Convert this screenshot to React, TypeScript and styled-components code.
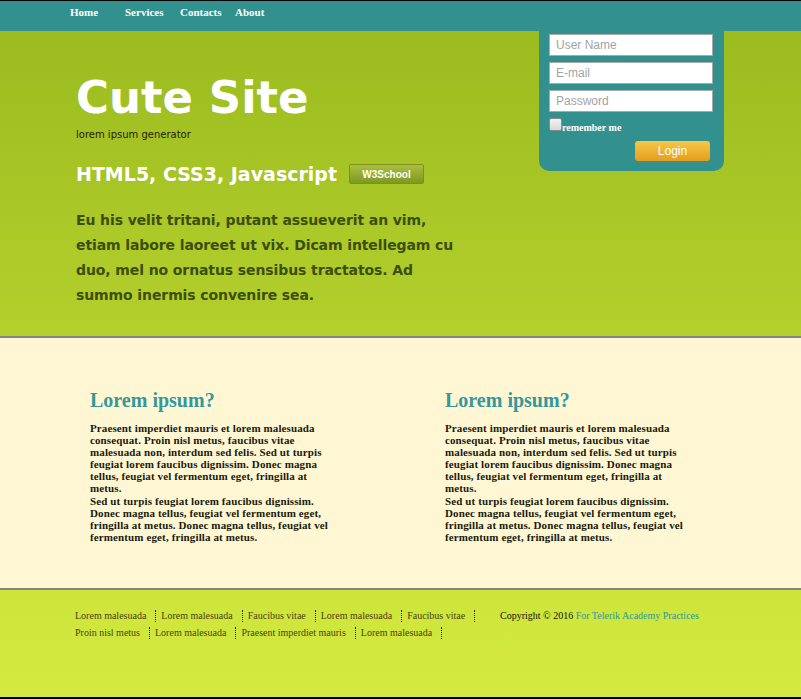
import React from "react";
import styled, { createGlobalStyle } from "styled-components";

const Global = createGlobalStyle`
  html, body { margin: 0; padding: 0; }
  body { font-family: "DejaVu Sans", Verdana, sans-serif; background: #cfe53c; }
  * { box-sizing: border-box; }
`;

const Page = styled.div`
  border-top: 1px solid #000;
  border-bottom: 2px solid #000;
`;

const Container = styled.div`
  width: 661px;
  margin: 0 auto;
`;

const NavBar = styled.nav`
  background: #32918f;
  height: 30px;
`;

const NavList = styled.ul`
  list-style: none;
  margin: 0;
  padding: 0;
  display: flex;
`;

const NavItem = styled.li`
  width: 55px;
  font-family: "Liberation Serif", "Times New Roman", serif;
  font-weight: bold;
  font-size: 11px;
  line-height: 22px;
  color: #fff;
`;

const Hero = styled.header`
  background: linear-gradient(to bottom, #9bbb1f, #b3d02c);
  height: 307px;
  border-bottom: 2px solid #858585;
`;

const HeroRow = styled(Container)`
  display: flex;
  align-items: flex-start;
`;

const HeroText = styled.div`
  flex: 1;
  padding: 41px 0 0 6px;
`;

const Title = styled.h1`
  margin: 0;
  font-size: 45px;
  line-height: 51px;
  font-weight: bold;
  color: #fff;
`;

const Tagline = styled.div`
  font-size: 10px;
  line-height: 14px;
  color: #2a1a00;
  margin-top: 5px;
`;

const TechRow = styled.div`
  display: flex;
  align-items: center;
  gap: 12px;
  margin-top: 20px;
`;

const Tech = styled.h2`
  margin: 0;
  font-size: 19px;
  line-height: 24px;
  font-weight: bold;
  color: #fff;
`;

const SchoolButton = styled.span`
  width: 75px;
  height: 20px;
  display: inline-flex;
  align-items: center;
  justify-content: center;
  border: 1px solid #7f8f22;
  border-radius: 2px;
  background: linear-gradient(to bottom, #a9bf3c, #7f9822);
  color: #fff;
  font-family: "Liberation Sans", Arial, sans-serif;
  font-weight: bold;
  font-size: 10px;
`;

const Lead = styled.p`
  margin: 22px 0 0;
  width: 392px;
  font-size: 14px;
  letter-spacing: -0.1px;
  line-height: 25px;
  font-weight: bold;
  color: #3d4d0c;
`;

const LoginPanel = styled.form`
  width: 185px;
  margin-right: 7px;
  background: #32918f;
  border-radius: 0 0 10px 10px;
  padding: 3px 10px 10px;
  display: flex;
  flex-direction: column;
  gap: 6px;
`;

const Field = styled.input`
  width: 164px;
  height: 22px;
  border: 1px solid #a9a9a9;
  background: #fff;
  padding: 0 6px;
  font-family: "Liberation Sans", Arial, sans-serif;
  font-size: 12px;
  outline: none;
  &::placeholder { color: #a3a3a3; }
`;

const Remember = styled.label`
  display: flex;
  align-items: flex-end;
  font-family: "Liberation Serif", "Times New Roman", serif;
  font-weight: bold;
  font-size: 10px;
  color: #fff;
  height: 15px;
`;

const Check = styled.span`
  width: 13px;
  height: 13px;
  border: 1px solid #8a8a8a;
  border-radius: 2px;
  background: linear-gradient(to bottom, #f2f2f2, #d8d8d8);
  margin-bottom: 2px;
`;

const ButtonRow = styled.div`
  display: flex;
  justify-content: flex-end;
  padding: 2px 4px 0 0;
`;

const LoginButton = styled.span`
  width: 75px;
  height: 20px;
  display: inline-flex;
  align-items: center;
  justify-content: center;
  border-radius: 3px;
  background: linear-gradient(to bottom, #f6c744, #e59d1e);
  color: #fff;
  font-family: "Liberation Sans", Arial, sans-serif;
  font-size: 12px;
`;

const Content = styled.section`
  background: #fff7d4;
  height: 252px;
  border-bottom: 2px solid #858585;
`;

const Columns = styled(Container)`
  display: grid;
  grid-template-columns: 355px 1fr;
  padding: 50px 0 0 20px;
`;

const Article = styled.article`
  width: 245px;
`;

const ArticleTitle = styled.h3`
  margin: 0 0 10px;
  font-family: "Liberation Serif", "Times New Roman", serif;
  font-size: 20px;
  line-height: 24px;
  font-weight: bold;
  color: #35989a;
`;

const ArticleText = styled.p`
  margin: 0;
  font-family: "Liberation Serif", "Times New Roman", serif;
  font-size: 11px;
  letter-spacing: 0.12px;
  line-height: 12.1px;
  font-weight: bold;
  color: #1a1a0a;
`;

const Footer = styled.footer`
  background: linear-gradient(to bottom, #cde43a, #d4ea40);
  height: 107px;
`;

const FooterRow = styled(Container)`
  display: flex;
  align-items: flex-start;
  padding-top: 20px;
`;

const LinkList = styled.ul`
  list-style: none;
  margin: 0;
  padding: 0;
  width: 420px;
  display: flex;
  flex-wrap: wrap;
  row-gap: 5px;
`;

const LinkItem = styled.li`
  padding: 0 9px 0 5px;
  border-right: 1px dotted #2a2a00;
  font-family: "Liberation Serif", "Times New Roman", serif;
  font-size: 10px;
  line-height: 12px;
  color: #4a4310;
`;

const Copyright = styled.div`
  margin-left: 10px;
  font-family: "Liberation Serif", "Times New Roman", serif;
  font-size: 10px;
  line-height: 12px;
  color: #111;
`;

const Credit = styled.span`
  color: #2a9a9a;
`;

const links = [
  "Lorem malesuada",
  "Lorem malesuada",
  "Faucibus vitae",
  "Lorem malesuada",
  "Faucibus vitae",
  "Proin nisl metus",
  "Lorem malesuada",
  "Praesent imperdiet mauris",
  "Lorem malesuada",
];

const articleText = (
  <>
    Praesent imperdiet mauris et lorem malesuada consequat. Proin nisl metus, faucibus vitae malesuada non, interdum sed felis. Sed ut turpis feugiat lorem faucibus dignissim. Donec magna tellus, feugiat vel fermentum eget, fringilla at metus.
    <br />
    Sed ut turpis feugiat lorem faucibus dignissim. Donec magna tellus, feugiat vel fermentum eget, fringilla at metus. Donec magna tellus, feugiat vel fermentum eget, fringilla at metus.
  </>
);

export default function App() {
  return (
    <Page>
      <Global />
      <NavBar>
        <Container>
          <NavList>
            {["Home", "Services", "Contacts", "About"].map((n) => (
              <NavItem key={n}>{n}</NavItem>
            ))}
          </NavList>
        </Container>
      </NavBar>
      <Hero>
        <HeroRow>
          <HeroText>
            <Title>Cute Site</Title>
            <Tagline>lorem ipsum generator</Tagline>
            <TechRow>
              <Tech>HTML5, CSS3, Javascript</Tech>
              <SchoolButton>W3School</SchoolButton>
            </TechRow>
            <Lead>
              Eu his velit tritani, putant assueverit an vim, etiam labore laoreet ut vix. Dicam intellegam cu duo, mel no ornatus sensibus tractatos. Ad summo inermis convenire sea.
            </Lead>
          </HeroText>
          <LoginPanel onSubmit={(e) => e.preventDefault()}>
            <Field placeholder="User Name" />
            <Field placeholder="E-mail" />
            <Field placeholder="Password" type="password" />
            <Remember>
              <Check />
              remember me
            </Remember>
            <ButtonRow>
              <LoginButton>Login</LoginButton>
            </ButtonRow>
          </LoginPanel>
        </HeroRow>
      </Hero>
      <Content>
        <Columns>
          <Article>
            <ArticleTitle>Lorem ipsum?</ArticleTitle>
            <ArticleText>{articleText}</ArticleText>
          </Article>
          <Article>
            <ArticleTitle>Lorem ipsum?</ArticleTitle>
            <ArticleText>{articleText}</ArticleText>
          </Article>
        </Columns>
      </Content>
      <Footer>
        <FooterRow>
          <LinkList>
            {links.map((l, i) => (
              <LinkItem key={i}>{l}</LinkItem>
            ))}
          </LinkList>
          <Copyright>
            Copyright © 2016 <Credit>For Telerik Academy Practices</Credit>
          </Copyright>
        </FooterRow>
      </Footer>
    </Page>
  );
}
